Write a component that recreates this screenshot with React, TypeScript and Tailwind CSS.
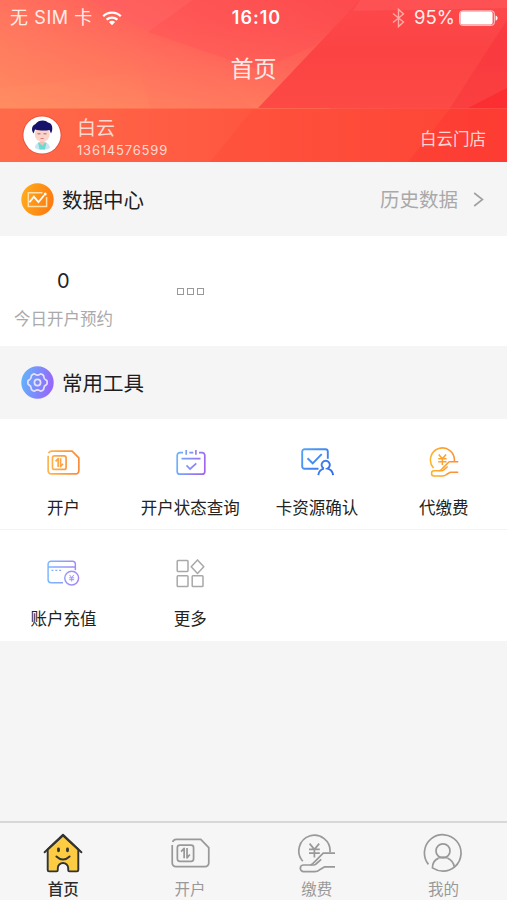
import React, { useState } from 'react';

const HeaderBackdrop = () => (
  <svg className="absolute inset-0 h-full w-full" viewBox="0 0 507 162" preserveAspectRatio="none" aria-hidden="true">
    <defs>
      <linearGradient id="hd-base" x1="0" y1="0.8" x2="1" y2="0.2">
        <stop offset="0" stopColor="#ff9664" />
        <stop offset="0.3" stopColor="#ff7860" />
        <stop offset="0.52" stopColor="#ff5f59" />
        <stop offset="1" stopColor="#fb4346" />
      </linearGradient>
      <linearGradient id="hd-low" x1="0" y1="0" x2="0" y2="1">
        <stop offset="0.2" stopColor="#ff7a5a" stopOpacity="0" />
        <stop offset="1" stopColor="#ff8a60" stopOpacity="0.55" />
      </linearGradient>
      <linearGradient id="hd-bar" x1="0" y1="0" x2="1" y2="0">
        <stop offset="0" stopColor="#ff6b4a" />
        <stop offset="0.5" stopColor="#ff5640" />
        <stop offset="1" stopColor="#fd3f35" />
      </linearGradient>
      <linearGradient id="hd-red" x1="0" y1="0" x2="0" y2="1">
        <stop offset="0" stopColor="#fd484b" />
        <stop offset="0.5" stopColor="#fb4343" />
        <stop offset="1" stopColor="#fd4a45" />
      </linearGradient>
    </defs>
    <rect width="507" height="162" fill="url(#hd-base)" />
    <rect width="330" height="110" fill="url(#hd-low)" />
    <polygon points="0,0 90,0 148,32 140,72 0,88" fill="#ff6f5a" opacity="0.14" />
    <polygon points="90,0 193,0 148,32" fill="#ff6068" opacity="0.35" />
    <polygon points="193,0 360,0 316,45 260,70 148,32" fill="#ff4c54" opacity="0.3" />
    <polygon points="148,32 140,72 150,108 253,108" fill="#ff6a5c" opacity="0.15" />
    <polygon points="360,0 507,0 507,108 258,108" fill="url(#hd-red)" />
    <polygon points="360,0 507,0 507,8 353,11" fill="#ff6468" opacity="0.35" />
    <polygon points="507,20 507,108 450,108" fill="#f8303a" opacity="0.4" />
    <polygon points="507,88 507,108 468,108" fill="#fb2429" opacity="0.6" />
    <rect y="108.5" width="507" height="53.5" fill="url(#hd-bar)" />
    <polygon points="253,109 450,109 408,162 210,162" fill="#ff4a36" opacity="0.4" />
    <polygon points="450,109 507,109 507,162 408,162" fill="#fc362f" opacity="0.4" />
  </svg>
);

const WifiIcon = () => (
  <svg className="ml-[9px] h-[16px] w-[20px]" viewBox="0 0 20 16" fill="none" stroke="#fff" strokeWidth="2.3">
    <path d="M1.2 6.2a12.6 12.6 0 0 1 17.6 0" />
    <path d="M4.6 9.7a7.8 7.8 0 0 1 10.8 0" />
    <path d="M10 15.2 6.9 12.1a4.5 4.5 0 0 1 6.2 0Z" fill="#fff" stroke="none" />
  </svg>
);

const BluetoothIcon = () => (
  <svg className="h-[20px] w-[13px]" viewBox="0 0 13 20" fill="none" stroke="#ffaaa6" strokeWidth="1.4">
    <path d="M1 5.5 11.5 14 6.5 18.6V1.4L11.5 6 1 14.5" />
  </svg>
);

const BatteryIcon = () => (
  <svg className="ml-[4px] h-[16px] w-[39px]" viewBox="0 0 39 16" fill="none">
    <rect x="0.7" y="0.9" width="34.6" height="14.4" rx="2.6" stroke="#ffd5d5" strokeWidth="1" />
    <rect x="1.4" y="1.6" width="32.2" height="13" rx="1.8" fill="#fff" />
    <path d="M36.6 5.4c1.5.6 2 1.500 2 2.700s-.5 2.100-2 2.700Z" fill="#fff" />
  </svg>
);

const Avatar = () => (
  <svg className="h-[40px] w-[40px]" viewBox="0 0 40 40">
    <circle cx="20" cy="20" r="19.6" fill="#e8503c" />
    <circle cx="20" cy="20" r="18.6" fill="#fff" />
    <path d="M13 33c0-4 3-6 7-6s8 2 8 6l-3 1.500h-9Z" fill="#c9e6f5" />
    <path d="M16 27.500h8.500l-1.500 7h-5.500Z" fill="#6fd9cf" />
    <path d="M18 25h4.500v3.500l-2.200 2-2.300-2Z" fill="#f5c0b4" />
    <ellipse cx="20.2" cy="19.500" rx="7.500" ry="7.300" fill="#fbd3c8" />
    <path d="M11.500 18.500c-2.700-4-1.500-8 2-9.500 3-4.500 10-4.500 12.500-1.500 4.500.5 5.500 6.500 3 11l-1.500-3.500c-4 .8-10 .8-14.500-.5Z" fill="#17126a" />
    <path d="M15.500 18.800h3M21.500 18.800h3" stroke="#7a5260" strokeWidth="0.8" />
    <path d="M18.500 23.500h3.200" stroke="#d9776f" strokeWidth="0.9" />
  </svg>
);

const ChartBadge = () => (
  <svg className="h-[33px] w-[33px]" viewBox="0 0 33 33" fill="none">
    <defs>
      <linearGradient id="badge-o" x1="0" y1="0" x2="1" y2="0.3">
        <stop offset="0" stopColor="#ffb01f" />
        <stop offset="1" stopColor="#fd7d12" />
      </linearGradient>
    </defs>
    <circle cx="16.5" cy="16.5" r="16.2" fill="url(#badge-o)" />
    <g stroke="#ffe0a8" strokeWidth="1.5">
      <path d="M21.500 9.800H7.300v13.800h18.300V14" />
      <path d="m8.500 19.200 4.300-5.600 4.700 5.600 5.600-7" stroke="#fff" strokeWidth="1.8" />
      <circle cx="24.200" cy="11" r="1.500" fill="#fff" stroke="none" />
    </g>
  </svg>
);

const GearBadge = () => (
  <svg className="h-[33px] w-[33px]" viewBox="0 0 33 33" fill="none">
    <defs>
      <linearGradient id="badge-p" x1="0" y1="0.4" x2="1" y2="0.6">
        <stop offset="0" stopColor="#62b2fa" />
        <stop offset="1" stopColor="#9a63fb" />
      </linearGradient>
    </defs>
    <circle cx="16.5" cy="16.5" r="16.2" fill="url(#badge-p)" />
    <g stroke="#e6e3ff" strokeWidth="1.7" strokeLinejoin="round">
      <path d="M12.200 8.200q1.200-.7 2 .2q2.300 1.500 4.600 0q.8-.9 2-.2l1.200.8q1 .7.800 1.800q.2 2.500 2.300 3.300q1 .4 1 1.300v2.200q0 .9-1 1.300q-2.100.8-2.300 3.300q.2 1.100-.8 1.800l-1.200.8q-1.200.7-2-.2q-2.300-1.500-4.600 0q-.8.9-2 .2L11 24q-1-.7-.8-1.800q-.2-2.500-2.300-3.300q-1-.4-1-1.300v-2.200q0-.9 1-1.300q2.100-.8 2.300-3.300Q10 9.700 11 9Z" />
      <circle cx="16.5" cy="16.5" r="3.1" />
    </g>
  </svg>
);

/* SIM card outline, used by the tool grid and by the tab bar */
const SimShape = ({ stroke, width = 1.7 }: { stroke: string; width?: number }) => (
  <g fill="none" stroke={stroke} strokeWidth={width} strokeLinejoin="round">
    <path d="M1.200 6.800v17.400a3.600 3.600 0 0 0 3.600 3.600h28.400a3.600 3.600 0 0 0 3.600-3.600V9.200L29 1.200H5.200a4 4 0 0 0-3.600 2.600" />
    <rect x="6.200" y="6.800" width="15.800" height="15.800" rx="2.400" />
    <path d="M9.800 13.200 12.800 10v9.600M15.600 9.600v9.600l2.800-3.200" />
  </g>
);

/* Coin resting on an open hand */
const CoinHandShape = ({ stroke, width = 1.7 }: { stroke: string; width?: number }) => (
  <g fill="none" stroke={stroke} strokeWidth={width} strokeLinejoin="round">
    <path d="M5.800 27.200A15.600 15.600 0 1 1 33 18.200" />
    <path d="M38 19.200H26.200l-8.600 8.600q-2.400 3.200-4.400 3.200H6.600a3.300 3.300 0 0 0 0 6.600h11q3 0 5-1.800l5.200-3H38" />
    <path d="M13.200 31h3.400q1.400 0 2.400-1l5.200-4.600" />
    <path d="m12.600 9.600 4.800 5.800 4.800-5.800M17.400 15.400v8M12 15.400h10.800M12 19.200h10.800" />
  </g>
);

const OpenAccountIcon = () => (
  <svg className="ml-[1px] h-[25px] w-[33px]" viewBox="0 0 38 29">
    <defs>
      <linearGradient id="t-sim" gradientUnits="userSpaceOnUse" x1="0" y1="0" x2="38" y2="0">
        <stop offset="0" stopColor="#ffb650" />
        <stop offset="1" stopColor="#f88b3a" />
      </linearGradient>
    </defs>
    <SimShape stroke="url(#t-sim)" width={2} />
  </svg>
);

const CalendarIcon = () => (
  <svg className="ml-[1px] h-[27px] w-[30px]" viewBox="0 0 30 27" fill="none">
    <defs>
      <linearGradient id="t-cal" gradientUnits="userSpaceOnUse" x1="0" y1="10" x2="30" y2="16">
        <stop offset="0" stopColor="#6cb4fc" />
        <stop offset="1" stopColor="#a164ee" />
      </linearGradient>
    </defs>
    <g stroke="url(#t-cal)" strokeWidth="1.7">
      <path d="M7 3.600H4a2.800 2.800 0 0 0-2.800 2.800v16a2.800 2.800 0 0 0 2.800 2.800h22a2.800 2.800 0 0 0 2.800-2.800v-16A2.800 2.800 0 0 0 26 3.600h-3M13.300 3.600h4" />
      <path d="M10.200 1v4.800M19.900 1v4.800M5.500 9.600h19M10.500 16.400l3.600 3.600 6.200-5.600" />
    </g>
  </svg>
);

const CardConfirmIcon = () => (
  <svg className="ml-[1px] h-[28px] w-[33px]" viewBox="0 0 33 28" fill="none">
    <defs>
      <linearGradient id="t-conf" gradientUnits="userSpaceOnUse" x1="0" y1="0" x2="33" y2="28">
        <stop offset="0" stopColor="#58a6f8" />
        <stop offset="1" stopColor="#2a66e8" />
      </linearGradient>
    </defs>
    <g stroke="url(#t-conf)" strokeWidth="1.9">
      <path d="M17.500 20.800H3.600A2.400 2.400 0 0 1 1.200 18.400V3.600a2.400 2.400 0 0 1 2.400-2.400h20.800a2.400 2.400 0 0 1 2.400 2.400v7.100" />
      <path d="m6.500 10.300 5.200 5 9-9.200" />
      <path d="M22.900 20.600a4.100 4.100 0 1 1 3.600 0q5 1.100 5.600 6.600M22.900 20.600q-5 1.100-5.600 6.600" />
    </g>
  </svg>
);

const PayForIcon = () => (
  <svg className="h-[30px] w-[30px]" viewBox="0 0 39 39">
    <defs>
      <linearGradient id="t-pay" gradientUnits="userSpaceOnUse" x1="0" y1="0" x2="39" y2="0">
        <stop offset="0" stopColor="#ffb428" />
        <stop offset="1" stopColor="#fb8c38" />
      </linearGradient>
    </defs>
    <CoinHandShape stroke="url(#t-pay)" width={2} />
  </svg>
);

const TopUpIcon = () => (
  <svg className="ml-[1px] h-[26px] w-[33px]" viewBox="0 0 34 27" fill="none">
    <defs>
      <linearGradient id="t-top" gradientUnits="userSpaceOnUse" x1="0" y1="0" x2="34" y2="0">
        <stop offset="0" stopColor="#78b8ff" />
        <stop offset="1" stopColor="#a884f6" />
      </linearGradient>
    </defs>
    <g stroke="url(#t-top)" strokeWidth="1.5">
      <path d="M16.500 23.600H4a3 3 0 0 1-3-3V4.200a3 3 0 0 1 3-3h22.300a3 3 0 0 1 3 3v6.500M1 7.300h28.300" />
      <path d="M4.500 10.800h2M8.500 10.800h2M12.500 10.800h2" />
      <circle cx="25.5" cy="18.8" r="7.2" />
      <path d="m23.300 15.500 2.200 2.900 2.200-2.900M25.500 18.400v4M22.900 18.500h5.200M22.900 20.400h5.200" strokeWidth="1" />
    </g>
  </svg>
);

const MoreIcon = () => (
  <svg className="ml-[1px] h-[29px] w-[29px]" viewBox="0 0 29 29" fill="none" stroke="#a8a8a8" strokeWidth="1.5" strokeLinejoin="round">
    <rect x="1.200" y="1.600" width="10.800" height="10.800" rx="0.800" />
    <rect x="1.200" y="16.800" width="10.800" height="10.800" rx="0.800" />
    <rect x="16.200" y="16.800" width="10.800" height="10.800" rx="0.800" />
    <path d="m21.500.9 6.300 6.800-6.300 6.800-6.300-6.800Z" />
  </svg>
);

const HomeTabIcon = () => (
  <svg className="h-[40px] w-[40px]" viewBox="0 0 40 40" fill="none" stroke="#333" strokeWidth="1.9" strokeLinejoin="round" strokeLinecap="round">
    <path d="M4.700 16.500 20 2.500l15.300 14V37q0 1.400-1.400 1.400h-7.500q-1.200 0-1.200-1.400v-1.800a5.200 5.200 0 0 0-10.400 0V37q0 1.400-1.200 1.400H6.100q-1.400 0-1.400-1.400Z" fill="#fdcc42" />
    <path d="M1.600 19.300 20 1.700l18.400 17.600" />
    <path d="M13.400 23.500q6.600 6.200 13.200 0" />
    <path d="M15.500 16v1.800M24.500 16v1.800" strokeWidth="2.800" />
  </svg>
);

const OpenTabIcon = () => (
  <svg className="h-[30px] w-[39px]" viewBox="0 0 38 29">
    <SimShape stroke="#999" />
  </svg>
);

const PayTabIcon = () => (
  <svg className="h-[39px] w-[39px]" viewBox="0 0 39 39">
    <CoinHandShape stroke="#999" />
  </svg>
);

const MineTabIcon = () => (
  <svg className="mr-[1px] h-[40px] w-[40px]" viewBox="0 0 40 40" fill="none" stroke="#999" strokeWidth="1.7">
    <path d="M5.400 31.400A18.300 18.300 0 1 1 32 33.600q-5 4.500-12 4.500-5.600 0-10.600-3.200 0-7.300 6.200-9.800M24.400 25q5.800 2.600 7 9" />
    <path d="M15.600 25.100a10.500 10.500 0 0 1 8.800 0" strokeOpacity="0.9" />
    <circle cx="20" cy="17.900" r="7" />
  </svg>
);

const tools = [
  { label: '开户', Icon: OpenAccountIcon },
  { label: '开户状态查询', Icon: CalendarIcon },
  { label: '卡资源确认', Icon: CardConfirmIcon },
  { label: '代缴费', Icon: PayForIcon },
  { label: '账户充值', Icon: TopUpIcon },
  { label: '更多', Icon: MoreIcon },
];

const tabs = [
  { label: '首页', Icon: HomeTabIcon },
  { label: '开户', Icon: OpenTabIcon },
  { label: '缴费', Icon: PayTabIcon },
  { label: '我的', Icon: MineTabIcon },
];

const ToolRow = ({ items }: { items: typeof tools }) => (
  <div className="grid h-[111px] grid-cols-4">
    {items.map(({ label, Icon }) => (
      <button key={label} className="flex flex-col items-center pt-[25px]">
        <span className="flex h-[36px] items-center justify-center">
          <Icon />
        </span>
        <span className="mt-[16px] text-[16.5px] leading-6 whitespace-nowrap text-[#222]">{label}</span>
      </button>
    ))}
  </div>
);

const App = () => {
  const [active, setActive] = useState(0);

  return (
    <div className="flex h-[900px] w-full flex-col overflow-hidden bg-[#f5f5f5] font-['Inter','Noto_Sans_CJK_SC',sans-serif]">
      <header className="relative h-[162px] shrink-0 text-white">
        <HeaderBackdrop />
        <div className="relative flex h-full flex-col">
          <div className="grid h-[34px] grid-cols-3 items-center pt-[1px] pr-[9px] pl-[10px] text-[18px] leading-none">
            <div className="flex items-center text-[#ffece6]">
              <span className="tracking-[0.6px] whitespace-nowrap">无 SIM 卡</span>
              <WifiIcon />
            </div>
            <div className="pl-[5px] text-center font-semibold tracking-[1px]">16:10</div>
            <div className="flex items-center justify-end">
              <BluetoothIcon />
              <span className="ml-[9px] text-[18.5px] text-[#ffeceb]">95%</span>
              <BatteryIcon />
            </div>
          </div>
          <h1 className="flex h-[74px] items-center justify-center pb-[4px] text-[23px] leading-none text-[#ffeae7]">首页</h1>
          <div className="flex h-[54px] items-center justify-between pr-[21px] pl-[22px]">
            <div className="flex items-center">
              <Avatar />
              <div className="ml-[15px] flex flex-col pt-[7px] text-[#ffd9cf]">
                <span className="text-[19px] leading-[24px]">白云</span>
                <span className="text-[13px] leading-[19px] tracking-[0.8px]">13614576599</span>
              </div>
            </div>
            <span className="pt-[8px] text-[16.5px] text-[#ffd5cf]">白云门店</span>
          </div>
        </div>
      </header>

      <div className="flex h-[74px] shrink-0 items-center px-[21px]">
        <ChartBadge />
        <h2 className="ml-[8px] pt-[4px] text-[20.5px] text-[#1e1e1e]">数据中心</h2>
        <button className="ml-auto flex items-center text-[19.5px] text-[#a9a9a9]">
          <span className="pt-[4px]">历史数据</span>
          <svg className="mr-[2px] ml-[15px] h-[15px] w-[11px]" viewBox="0 0 11 15" fill="none" stroke="#a0a0a0" strokeWidth="1.6">
            <path d="m1.200 1 8.300 6.500L1.200 14" />
          </svg>
        </button>
      </div>

      <section className="grid h-[110px] shrink-0 grid-cols-4 bg-white">
        <div className="flex flex-col items-center pt-[32px]">
          <span className="text-[20px] leading-[26px] text-[#222]">0</span>
          <span className="mt-[13px] text-[16.5px] leading-6 whitespace-nowrap text-[#aaa]">今日开户预约</span>
        </div>
        <div className="flex items-center justify-center gap-[3px]">
          <span className="h-[7px] w-[7px] border-[1.5px] border-[#999]" />
          <span className="h-[7px] w-[7px] border-[1.5px] border-[#999]" />
          <span className="h-[7px] w-[7px] border-[1.5px] border-[#999]" />
        </div>
      </section>

      <div className="flex h-[73px] shrink-0 items-center px-[21px]">
        <GearBadge />
        <h2 className="ml-[8px] pt-[4px] text-[20.5px] text-[#1e1e1e]">常用工具</h2>
      </div>

      <section className="shrink-0 divide-y divide-[#f3f3f3] bg-white">
        <ToolRow items={tools.slice(0, 4)} />
        <ToolRow items={tools.slice(4)} />
      </section>

      <nav className="mt-auto grid h-[79px] grid-cols-4 border-t-2 border-[#d8d8d8] bg-[#f6f6f6]">
        {tabs.map(({ label, Icon }, index) => (
          <button key={label} onClick={() => setActive(index)} className="flex flex-col items-center pt-[10px]">
            <span className="flex h-[40px] items-center">
              <Icon />
            </span>
            <span className={`mt-[5px] text-[15.5px] leading-[24px] ${index === active ? 'font-medium text-[#2b2b2b]' : 'text-[#999]'}`}>{label}</span>
          </button>
        ))}
      </nav>
    </div>
  );
};

export default App;
